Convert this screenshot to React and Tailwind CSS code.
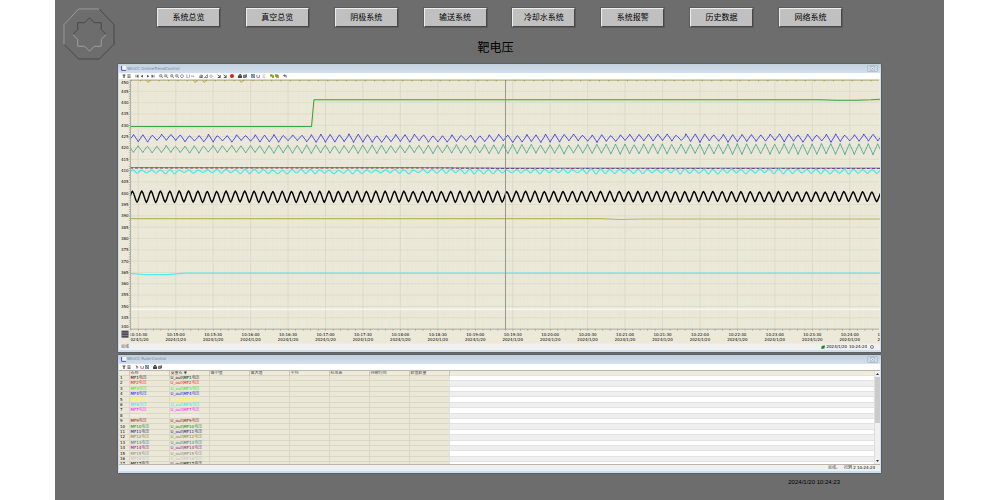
import React from 'react';

const navItems = ['系统总览', '真空总览', '阴极系统', '输送系统', '冷却水系统', '系统报警', '历史数据', '网络系统'];

const columns = ['名称', '变量名 ▼', '最小值', '最大值', '平均', '标准差', '持续时间', '数值数量'];

const tags = [
  { id: 1, color: 'text-black' },
  { id: 2, color: 'text-[#ff0000]' },
  { id: 3, color: 'text-[#00f000]' },
  { id: 4, color: 'text-[#0000f0]' },
  { id: 5, color: 'text-[#ffff00]' },
  { id: 6, color: 'text-[#00f0f0]' },
  { id: 7, color: 'text-[#ff00ff]' },
  { id: 8, color: 'text-[#f8f7f0]' },
  { id: 9, color: 'text-[#800000]' },
  { id: 10, color: 'text-[#008000]' },
  { id: 11, color: 'text-[#000080]' },
  { id: 12, color: 'text-[#808000]' },
  { id: 13, color: 'text-[#008080]' },
  { id: 14, color: 'text-[#800080]' },
  { id: 15, color: 'text-[#808080]' },
  { id: 16, color: 'text-[#c0c0c0]' },
  { id: 17, color: 'text-black' },
];

// plot area inside the 759 x 264 chart
const LEFT = 11.5;
const RIGHT = 758;
const BOTTOM = 249.5;
const STEP = 37.35;
const PERIOD = STEP / 4;

const yOf = (value) => 1 + (450 - value) * 2.258;

const noise = (n) => {
  const s = Math.sin(n * 12.9898) * 43758.5453;
  return s - Math.floor(s);
};

const wave = ({ phase, top, bottom, jitter, seed, grow = 0, round = 0.14 }) => {
  const pts = [];
  for (let i = -1; i < 81; i++) {
    const x = LEFT + phase + i * PERIOD;
    const g = (grow * i) / 80;
    const p = top + noise(i + seed) * jitter - g;
    const t = bottom - noise(i * 3 + seed) * jitter + g;
    const d = (t - p) * round;
    pts.push([x, p], [x + PERIOD * 0.12, p + d], [x + PERIOD * 0.4, t - d], [x + PERIOD * 0.5, t]);
    pts.push([x + PERIOD * 0.61, t - d], [x + PERIOD * 0.89, p + d]);
  }
  return pts.map(([x, y]) => `${x.toFixed(1)},${y.toFixed(1)}`).join(' ');
};

const timeLabels = Array.from({ length: 20 }, (_, i) => {
  const seconds = 14 * 60 + 30 + i * 30;
  const mm = Math.floor(seconds / 60);
  const ss = String(seconds % 60).padStart(2, '0');
  return { x: 19.2 + i * STEP, text: `10:${mm}:${ss}` };
});

const valueLabels = Array.from({ length: 23 }, (_, i) => 450 - i * 5);

const Logo = () => (
  <svg viewBox="0 0 53 53" className="w-[52px] h-[52px]" fill="none" strokeWidth="1">
    <path d="M37 1 L52 17 V37 L37 52 H16 L1 37" stroke="#474747" />
    <path d="M1 37 V17 L16 1 H37" stroke="#9b9b9b" />
    <path d="M10 27 L15 22 V15 H22 L27 10 L32 15 H39 V22 L44 27" stroke="#474747" />
    <path d="M44 27 L39 32 V39 H32 L27 44 L22 39 H15 V32 L10 27" stroke="#a0a0a0" />
  </svg>
);

const glyphs = {
  help: <path d="M0.8 1.2H4.2M2.5 1V5" stroke="#4d4a10" strokeWidth="1.4" />,
  config: <path d="M0.5 1H4.5M0.5 2.8H4.5M0.5 4.5H4.5" stroke="#444" strokeWidth="0.9" />,
  first: <path d="M1 1V4.5M4 1L2 2.7L4 4.5Z" stroke="#555" fill="#555" strokeWidth="0.7" />,
  prev: <path d="M3.5 1L1 2.7L3.5 4.5Z" fill="#333" />,
  next: <path d="M1.5 1L4 2.7L1.5 4.5Z" fill="#333" />,
  last: <path d="M4 1V4.5M1 1L3 2.7L1 4.5Z" stroke="#555" fill="#555" strokeWidth="0.7" />,
  zoom: <path d="M1 1H3.5V3.5H1ZM3.5 3.5L5 5" stroke="#555" strokeWidth="0.8" fill="none" />,
  move: <path d="M2.5 0.5L4.7 2.7L2.5 4.9L0.3 2.7Z" stroke="#444" strokeWidth="0.8" fill="none" />,
  axis: <path d="M1 0.5V4.5H3M4.5 0.5V4.5" stroke="#666" strokeWidth="0.7" fill="none" />,
  span: <path d="M0.3 2.7H4.7" stroke="#555" strokeWidth="1" strokeDasharray="1.6 0.6" />,
  chart: <path d="M0.5 4.5H4.5M1.2 4V2M2.6 4V0.6M4 4V1.2" stroke="#333" strokeWidth="0.9" />,
  ruler: <path d="M0.5 4.5L4.5 0.8V4.5Z" stroke="#555" strokeWidth="0.8" fill="none" />,
  clock: <path d="M2.5 0.8L4.3 2.7L2.5 4.6L0.8 2.7Z" stroke="#777" strokeWidth="0.8" fill="none" />,
  link: <path d="M0.8 1L4.2 4.4M4 1.2V4.4H1" stroke="#333" strokeWidth="1" fill="none" />,
  stop: <circle cx="2.5" cy="2.5" r="2.5" fill="#e01818" />,
  print: <path d="M0.5 2.2H4.5V4.6H0.5ZM1.5 0.7H4" stroke="#222" strokeWidth="1" fill="#555" />,
  copy: <path d="M0.5 1.5H3V4.5H0.5ZM3.4 0.8H4.8V3.8H3.4" stroke="#333" strokeWidth="0.8" fill="#999" />,
  blue: <path d="M0.2 0.3H4.8V4.8H0.2Z M1 1L4 4" fill="#8ab8dc" stroke="#1f4f7c" strokeWidth="0.6" />,
  red: <path d="M1 1V4.2H4.4V1.4" stroke="#c04880" strokeWidth="0.9" fill="none" />,
  gray: <path d="M0.8 1.2H4.2M0.8 2.8H3.4M0.8 4.4H4.2" stroke="#aaa" strokeWidth="0.8" />,
  green: <path d="M0.2 0.5H3V3H0.2Z M2.5 2H5V4.8H2.5Z" fill="#5c9a18" stroke="#b8b020" strokeWidth="0.5" />,
  yellow: <path d="M0.2 0.5H3V3H0.2Z M2 2H4.8V4.8H2Z" fill="#d8c018" stroke="#5a5210" strokeWidth="0.5" />,
  back: <path d="M0.6 2L2.2 0.9V3.1ZM2 2H4V4.6" stroke="#333" strokeWidth="0.8" fill="none" />,
  pin: <path d="M1 0.8L4 3M2.5 1.5V4.6" stroke="#a03050" strokeWidth="1.1" />,
};

const trendTools = [
  ['help', 'config'],
  ['first', 'prev', 'next', 'last'],
  ['zoom', 'zoom', 'zoom', 'zoom', 'move', 'axis', 'span'],
  ['chart', 'ruler', 'clock'],
  ['link', 'link'],
  ['stop'],
  ['print', 'copy'],
  ['blue', 'red', 'gray'],
  ['green', 'yellow'],
  ['back'],
];

const rulerTools = [['help', 'config'], ['pin', 'red', 'blue'], ['print', 'copy']];

const Toolbar = ({ groups, className }) => (
  <div className="bg-white h-[6px] flex pl-[3px]">
    <div className={`flex items-center justify-between ${className}`}>
      {groups.map((group, g) => (
        <React.Fragment key={g}>
          {g > 0 && <span className="w-[2px]" />}
          {group.map((name, i) => (
            <button key={i} type="button" aria-label={name} className="w-[5px] h-[4px]">
              <svg viewBox="0 0 5 5" className="block w-[4px] h-[4px]">
                {glyphs[name]}
              </svg>
            </button>
          ))}
        </React.Fragment>
      ))}
    </div>
  </div>
);

const ControlWindow = ({ title, children }) => (
  <section className="border border-[#5a6066] rounded-t-[2px] bg-[#cfdeed]">
    <div className="h-[9px] px-[3px] flex items-center justify-between rounded-t-[2px] bg-linear-to-b from-[#c3d0de] to-[#d3e1ef]">
      <div className="flex items-center gap-px">
        <svg viewBox="0 0 5 5" className="w-[5px] h-[5px]">
          <path d="M0 0H5V5H0Z" fill="#f4f6fc" />
          <path d="M0.6 0V4.4H5" stroke="#5048b0" strokeWidth="1" fill="none" />
        </svg>
        <h2 className="text-[4px] leading-[6px] text-[#748396]">{title}</h2>
      </div>
      <button
        type="button"
        aria-label="Close"
        className="w-[11px] h-[7px] border border-[#b3c2d3] rounded-[1px] flex items-center justify-center"
      >
        <svg viewBox="0 0 5 5" className="w-[5px] h-[5px]">
          <path d="M0.3 0.5H4.7V4.7H0.3Z" fill="#eef2f6" stroke="#9aa8b8" strokeWidth="0.6" />
          <path d="M1.4 1.4L3.6 3.8M3.6 1.4L1.4 3.8" stroke="#8a96a6" strokeWidth="0.7" />
        </svg>
      </button>
    </div>
    <div className="mx-px mb-[2px] bg-[#f0f0f0]">{children}</div>
  </section>
);

const Series = ({ points, color, width = 0.8, dash }) => (
  <polyline points={points} fill="none" stroke={color} strokeWidth={width} strokeDasharray={dash} strokeLinejoin="round" />
);

const TrendChart = () => (
  <svg viewBox="0 0 759 264" className="block w-full">
    <defs>
      <clipPath id="plot">
        <rect x={LEFT} y="0" width={RIGHT - LEFT + 1} height="250" />
      </clipPath>
      <clipPath id="axis">
        <rect x={LEFT} y="250" width={RIGHT - LEFT + 1} height="14" />
      </clipPath>
    </defs>
    <rect width="759" height="264" fill="#ece9d9" />
    <g clipPath="url(#plot)">
      {Array.from({ length: 110 }, (_, i) => (
        <line key={i} x1={LEFT} x2={RIGHT} y1={yOf(450 - i)} y2={yOf(450 - i)} stroke="#e8e5d4" strokeWidth="0.4" />
      ))}
      {Array.from({ length: 200 }, (_, i) => (
        <line key={i} x1={19.2 + (i - 2) * 3.735} x2={19.2 + (i - 2) * 3.735} y1="0" y2={BOTTOM} stroke="#e8e5d4" strokeWidth="0.4" />
      ))}
      {valueLabels.map((v) => (
        <line key={v} x1={LEFT} x2={RIGHT} y1={yOf(v)} y2={yOf(v)} stroke="#dcd9c9" strokeWidth="0.8" />
      ))}
      {timeLabels.map((t) => (
        <line key={t.text} x1={t.x} x2={t.x} y1="0" y2={BOTTOM} stroke="#dad7c8" strokeWidth="0.8" />
      ))}

      <Series points={`${LEFT},1.2 ${RIGHT},1.2`} color="#b5b184" width={1} />
      <Series points={`${LEFT},1.8 ${RIGHT},1.8`} color="#a09a30" width={1} dash="1.2 8.14" />
      {[29, 76, 85, 122].map((x) => (
        <Series key={x} points={`${x - 2},1 ${x},3.6 ${x + 2},1`} color="#a8a040" />
      ))}
      <Series points="11,48.3 192.4,48.3 195,21.8 759,21.8" color="#d9e8c4" width={2} />
      <Series points="11,47.3 192,47.3 194.4,20.8 700,20.8 715,21.3 735,21.2 750,20.8 759,20.1" color="#3f9e3f" width={1} />
      <Series points={wave({ phase: 3, top: 54.6, bottom: 63.4, jitter: 2.2, seed: 4, round: 0.24 })} color="#3c38f0" width={0.9} />
      <Series points={wave({ phase: 7.5, top: 66, bottom: 74, jitter: 1.2, seed: 9, grow: 2, round: 0.24 })} color="#3da08e" width={0.8} />
      <Series points="11,88.7 300,88.7 380,89.2 759,89.2" color="#8a3850" width={1} dash="3 2" />
      <Series points="11,88.4 300,88.4 380,88.9 759,88.9" color="#5b58a0" width={0.8} />
      <Series points={wave({ phase: 2, top: 89.8, bottom: 94.6, jitter: 1.4, seed: 15, grow: 0.5 })} color="#30f0f0" width={1.1} />
      <Series points={wave({ phase: 1.8, top: 111.4, bottom: 123.4, jitter: 0.7, seed: 22, grow: -0.8, round: 0.16 })} color="#000" width={1.4} />
      <Series points="11,139.3 480,139.3 500,140.2 520,139.7 759,139.7" color="#b8b468" width={1.1} />
      <Series points="11,193.8 25,195.1 48,195.1 66,193.7 759,193.7" color="#50eeee" width={1.2} />
      <Series points="11,229.6 759,229.6" color="#f8f6f0" width={1.4} />
      <line x1="385.5" x2="385.5" y1="1" y2={BOTTOM} stroke="#8c8c84" strokeWidth="0.9" />
    </g>

    <path d={`M${LEFT} 1V${BOTTOM}H${RIGHT}`} stroke="#9a988c" strokeWidth="0.7" fill="none" />
    <path d={`M${LEFT - 1} 1V${BOTTOM}`} stroke="#9a988c" strokeWidth="1.4" strokeDasharray="0.6 1.658" />
    <path d={`M${LEFT} ${BOTTOM + 0.8}H${RIGHT}`} stroke="#88867c" strokeWidth="1.2" strokeDasharray="0.7 6.77" />

    <g fontSize="4" fill="#000">
      {valueLabels.map((v) => (
        <text key={v} x="9.5" y={Math.min(Math.max(yOf(v), 3.6), 247.4) + 1.4} textAnchor="end">
          {v}
        </text>
      ))}
    </g>
    <g fontSize="4" fill="#000" textAnchor="middle" clipPath="url(#axis)">
      {timeLabels.map((t) => (
        <g key={t.text}>
          <text x={t.x} y="256">{t.text}</text>
          <text x={t.x} y="261">2024/1/20</text>
        </g>
      ))}
    </g>
    <g fontSize="4" fill="#000" textAnchor="end">
      <text x="759" y="256">1</text>
      <text x="759" y="261">2</text>
    </g>
    <rect x="2.5" y="251" width="7" height="7" fill="#4a4858" />
    <path d="M2.5 253.3H9.5M2.5 255.8H9.5" stroke="#a8a4b4" strokeWidth="0.6" />
  </svg>
);

const RulerTable = () => (
  <div className="flex h-[95px] border-y border-[#b9b7ac]">
    <div className="grow overflow-hidden">
      <table className="w-full h-[96px] table-fixed border-collapse text-[4px] leading-[4px]">
        <thead>
          <tr className="bg-[#f0ecdc] text-left text-[#444]">
            <th className="w-[10px] p-0" />
            {columns.map((name) => (
              <th key={name} className="w-[40px] p-0 pl-px border-l border-[#c9c6b6] font-normal">
                {name}
              </th>
            ))}
            <th className="p-0 border-l border-[#c9c6b6]" />
          </tr>
        </thead>
        <tbody>
          {tags.map((tag) => (
            <tr key={tag.id} className="group">
              <td className="p-0 pl-px bg-[#ebe8d8] border-t border-[#dad7c8] text-black">{tag.id}</td>
              <td className={`p-0 pl-px bg-[#ebe8d8] border-t border-l border-[#dad7c8] whitespace-nowrap ${tag.color}`}>
                MF{tag.id}<span className="opacity-70">电压</span>
              </td>
              <td className={`p-0 pl-px bg-[#ebe8d8] border-t border-l border-[#dad7c8] whitespace-nowrap ${tag.color}`}>
                U_out\MF{tag.id}<span className="opacity-70">电压</span>
              </td>
              {columns.slice(2).map((name) => (
                <td key={name} className="p-0 bg-[#ebe8d8] border-t border-l border-[#dad7c8]" />
              ))}
              <td className="p-0 border-l border-t border-[#e2e2e0] bg-white group-even:bg-[#efefef]" />
            </tr>
          ))}
        </tbody>
      </table>
    </div>
    <div className="w-[6px] bg-[#f0f0f0] flex flex-col items-center border-l border-[#ddd]">
      <svg viewBox="0 0 5 6" className="w-[5px] h-[6px]">
        <path d="M1 4L2.5 2L4 4Z" fill="#333" />
      </svg>
      <div className="w-full h-[46px] bg-[#cbcbcb]" />
      <svg viewBox="0 0 5 6" className="w-[5px] h-[6px] mt-auto">
        <path d="M1 2L2.5 4L4 2Z" fill="#333" />
      </svg>
    </div>
  </div>
);

export default function App() {
  return (
    <div className="min-h-screen bg-white pl-[55px] pr-[56px] font-['DejaVu_Sans','Noto_Sans_CJK_SC',sans-serif]">
      <main className="min-h-screen bg-[#6d6d6d]">
        <header className="grid grid-cols-[52px_1fr] gap-x-[42px] pl-2 pr-[102px] pt-2">
          <div className="row-span-2">
            <Logo />
          </div>
          <nav className="flex justify-between">
            {navItems.map((item) => (
              <button
                key={item}
                type="button"
                className="w-[63px] h-[19px] bg-[#c0c0c0] border border-t-[#eee] border-l-[#eee] border-r-[#484848] border-b-[#484848] outline outline-[#5c5c5c] text-[8px] leading-[12px] text-black"
              >
                {item}
              </button>
            ))}
          </nav>
          <h1 className="pt-[14px] pb-[7px] pr-2 text-center text-[12px] leading-[15px] text-black">靶电压</h1>
        </header>

        <div className="pl-[62px] pr-[62px] flex flex-col gap-px">
          <ControlWindow title="WinCC OnlineTrendControl">
            <Toolbar groups={trendTools} className="w-[166px]" />
            <TrendChart />
            <div className="h-[6px] px-[2px] flex items-center justify-between text-[4px] leading-[5px] text-black">
              <span className="text-[#666]">就绪</span>
              <span className="flex items-center gap-[2px] pr-1">
                <svg viewBox="0 0 4 4" className="w-[4px] h-[4px]">
                  <path d="M0.4 1.6L2 0.4H4L3.4 3.4L0.4 4Z" fill="#188a28" />
                </svg>
                <time>2024/1/20</time>
                <time className="pr-px">10:24:24</time>
                <svg viewBox="0 0 4 4" className="w-[4px] h-[4px]">
                  <circle cx="2" cy="2" r="1.5" fill="none" stroke="#555" strokeWidth="0.7" />
                </svg>
              </span>
            </div>
          </ControlWindow>

          <ControlWindow title="WinCC RulerControl">
            <Toolbar groups={rulerTools} className="w-[41px]" />
            <RulerTable />
            <div className="h-[6px] pr-[5px] flex items-center justify-end gap-1 text-[4px] leading-[5px] text-black">
              <span className="text-[#666]">就绪。</span>
              <span>行列 2 10:24:24</span>
            </div>
          </ControlWindow>
        </div>

        <footer className="pt-1 pr-[104px] text-right text-[6px] leading-[8px] text-black font-['Liberation_Sans',sans-serif]">
          <time>2024/1/20 10:24:23</time>
        </footer>
      </main>
    </div>
  );
}
